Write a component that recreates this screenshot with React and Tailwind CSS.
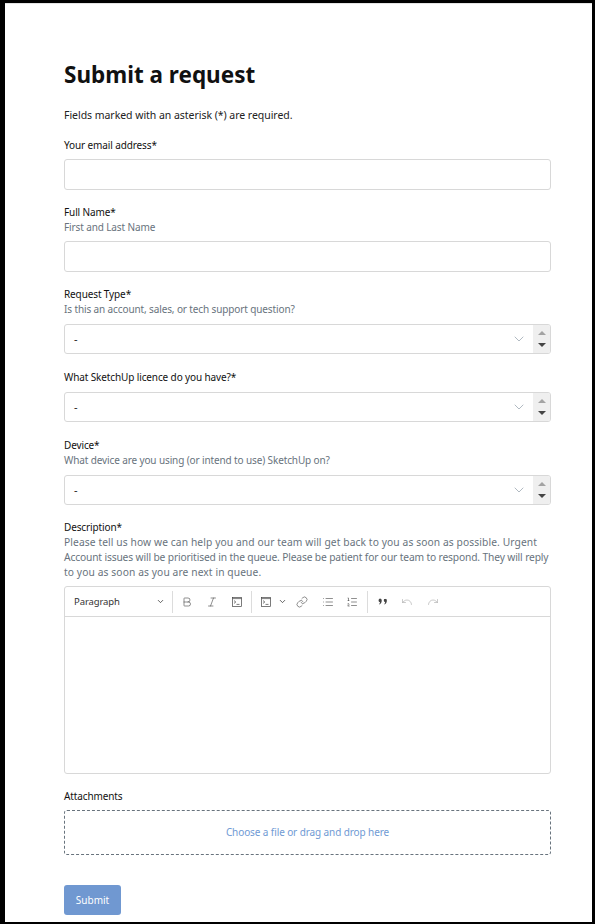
import { Bold, ChevronDown, Italic, Link, List, ListOrdered, Redo, Undo } from 'lucide-react';

function Label({ text, hint, gap = 'mb-[6px]' }) {
  return (
    <div className={`${gap} text-[10px] leading-[15px] tracking-[-0.12px]`}>
      <p className="text-[#111]">{text}</p>
      {hint && <p className="text-[#68737d]">{hint}</p>}
    </div>
  );
}

function Input() {
  return <div className="h-[31px] rounded-[3px] border border-[#d8d8d8] bg-white" />;
}

function Select() {
  return (
    <div className="flex h-[30px] items-stretch overflow-hidden rounded-[3px] border border-[#d8d8d8] bg-white">
      <span className="flex-1 pl-[9px] text-[11px] leading-[28px] text-[#222]">-</span>
      <span className="flex w-[28px] items-center justify-center">
        <ChevronDown className="h-[16px] w-[16px] text-[#8a97a3]" strokeWidth={1} />
      </span>
      <span className="flex w-[17px] flex-col items-center justify-center gap-[8px] bg-[#efefef]">
        <span className="h-0 w-0 border-x-[4px] border-b-[4px] border-x-transparent border-b-[#a3a3a3]" />
        <span className="h-0 w-0 border-x-[4px] border-t-[4px] border-x-transparent border-t-[#444]" />
      </span>
    </div>
  );
}

function Divider() {
  return <span className="h-[22px] w-px bg-[#dcdcdc]" />;
}

function Tool({ icon: Icon, dim, width = 'w-[25px]' }) {
  return (
    <span className={`flex ${width} items-center justify-center`}>
      <Icon className={`h-[12px] w-[12px] ${dim ? 'text-[#a8a8a8]' : 'text-[#444]'}`} strokeWidth={1.2} />
    </span>
  );
}

// code block icon: window with a title bar and a prompt
function CodeIcon({ className }) {
  return (
    <svg viewBox="0 0 12 12" fill="none" stroke="currentColor" strokeWidth={0.7} className={className}>
      <rect x="1.5" y="1.5" width="9" height="9" />
      <path d="M1.5 2.6h9" />
      <path d="M3 4.6 4.8 6 3 7.4M5.5 8.4h3" />
    </svg>
  );
}

function QuoteMarks() {
  return (
    <svg viewBox="0 0 12 12" className="h-[11px] w-[11px] text-[#444]" fill="currentColor">
      <path d="M3.2 2.8a2 2 0 0 1 2 2c0 2-1 3.6-2.4 4.4l-.5-.6c.6-.6 1-1.2 1-1.9A2 2 0 0 1 3.2 2.8zM8.8 2.8a2 2 0 0 1 2 2c0 2-1 3.6-2.4 4.4l-.5-.6c.6-.6 1-1.2 1-1.9a2 2 0 0 1 .1-3.9z" />
    </svg>
  );
}

function Toolbar() {
  return (
    <div className="flex h-[30px] items-center border-b border-[#d8d8d8] text-[#444]">
      <span className="w-[84px] pl-[9px] pt-[2px] text-[9.5px] tracking-[-0.1px] text-[#333]">Paragraph</span>
      <span className="flex w-[23px] items-center justify-center">
        <ChevronDown className="h-[9px] w-[9px] text-[#333]" strokeWidth={2} />
      </span>
      <Divider />
      <span className="w-[1px]" />
      <Tool icon={Bold} />
      <Tool icon={Italic} />
      <Tool icon={CodeIcon} />
      <span className="w-[2px]" />
      <Divider />
      <span className="w-[1px]" />
      <Tool icon={CodeIcon} width="w-[26px]" />
      <span className="flex w-[7px] items-center justify-center">
        <ChevronDown className="h-[9px] w-[9px] shrink-0 text-[#333]" strokeWidth={2} />
      </span>
      <Tool icon={Link} width="w-[32px]" />
      <Tool icon={List} width="w-[20px]" />
      <Tool icon={ListOrdered} width="w-[28px]" />
      <span className="w-[1px]" />
      <Divider />
      <span className="flex w-[28px] items-center justify-center">
        <QuoteMarks />
      </span>
      <Tool icon={Undo} dim width="w-[22px]" />
      <Tool icon={Redo} dim width="w-[30px]" />
    </div>
  );
}

export default function App() {
  return (
    <div
      className="h-[924px] w-[595px] overflow-hidden border-b-[2px] border-l-[5px] border-r-[3px] border-t-[3px] border-black bg-white"
      style={{ fontFamily: '"Noto Sans", sans-serif' }}
    >
      <div className="h-full border-t border-[#e4e4e4] pl-[59px] pr-[41px]">
        <h1 className="pt-[54px] text-[22.5px] font-bold leading-[33px] text-[#111]">Submit a request</h1>
        <p className="mt-[16px] text-[10.5px] leading-[16px] tracking-[-0.04px] text-[#222]">Fields marked with an asterisk (*) are required.</p>

        <div className="mt-[15px]">
          <Label text="Your email address*" />
          <Input />
        </div>
        <div className="mt-[15px]">
          <Label text="Full Name*" hint="First and Last Name" />
          <Input />
        </div>
        <div className="mt-[15px]">
          <Label text="Request Type*" hint="Is this an account, sales, or tech support question?" gap="mb-[7px]" />
          <Select />
        </div>
        <div className="mt-[16px]">
          <Label text="What SketchUp licence do you have?*" gap="mb-[7px]" />
          <Select />
        </div>
        <div className="mt-[16px]">
          <Label text="Device*" hint="What device are you using (or intend to use) SketchUp on?" gap="mb-[7px]" />
          <Select />
        </div>
        <div className="mt-[15px]">
          <p className="text-[10px] leading-[15px] tracking-[-0.12px] text-[#111]">Description*</p>
          <p className="mb-[6px] whitespace-nowrap text-[10.25px] leading-[15px] text-[#68737d]">
            <span className="block tracking-[0.1px]">Please tell us how we can help you and our team will get back to you as soon as possible. Urgent</span>
            <span className="block tracking-[-0.15px]">Account issues will be prioritised in the queue. Please be patient for our team to respond. They will reply</span>
            <span className="block tracking-[0.1px]">to you as soon as you are next in queue.</span>
          </p>
          <div className="h-[188px] rounded-[3px] border border-[#d8d8d8] bg-white">
            <Toolbar />
          </div>
        </div>
        <div className="mt-[15px]">
          <Label text="Attachments" />
          <div className="flex h-[45px] items-center justify-center rounded-[3px] border border-dashed border-[#68737d] text-[10px] tracking-[-0.1px] text-[#6f9ad4]">
            Choose a file or drag and drop here
          </div>
        </div>
        <button className="mt-[30px] h-[30px] w-[57px] rounded-[3px] bg-[#7098d1] text-[10px] text-white">Submit</button>
      </div>
    </div>
  );
}
